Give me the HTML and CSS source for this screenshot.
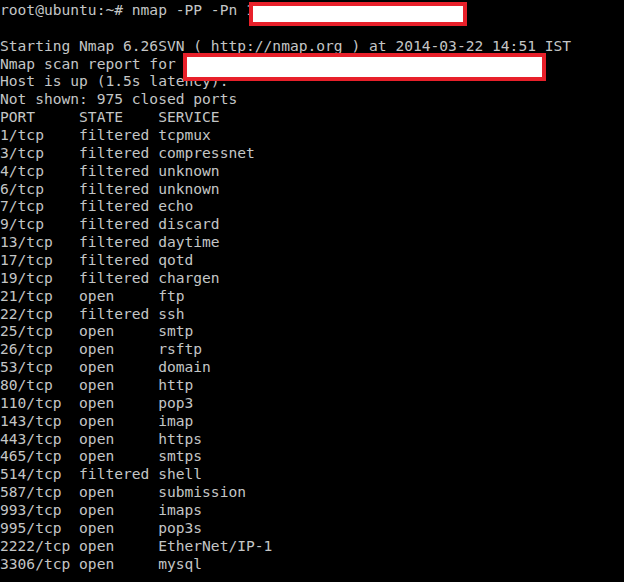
FILE: index.html
```html
<!DOCTYPE html>
<html>
<head>
<meta charset="utf-8">
<link rel="stylesheet" href="styles.css">
</head>
<body>
<div class="term">
<pre class="out">root@ubuntu:~# nmap -PP -Pn 1

Starting Nmap 6.26SVN ( http://nmap.org ) at 2014-03-22 14:51 IST
Nmap scan report for 
Host is up (1.5s latency).
Not shown: 975 closed ports
PORT     STATE    SERVICE
1/tcp    filtered tcpmux
3/tcp    filtered compressnet
4/tcp    filtered unknown
6/tcp    filtered unknown
7/tcp    filtered echo
9/tcp    filtered discard
13/tcp   filtered daytime
17/tcp   filtered qotd
19/tcp   filtered chargen
21/tcp   open     ftp
22/tcp   filtered ssh
25/tcp   open     smtp
26/tcp   open     rsftp
53/tcp   open     domain
80/tcp   open     http
110/tcp  open     pop3
143/tcp  open     imap
443/tcp  open     https
465/tcp  open     smtps
514/tcp  filtered shell
587/tcp  open     submission
993/tcp  open     imaps
995/tcp  open     pop3s
2222/tcp open     EtherNet/IP-1
3306/tcp open     mysql</pre>
<div class="redact redact-host"></div>
<div class="redact redact-report"></div>
</div>
</body>
</html>
```
FILE: styles.css
```css
html, body {
  margin: 0;
  padding: 0;
  background: #000;
}
.term {
  position: relative;
  width: 624px;
  height: 582px;
  background: #000;
  overflow: hidden;
}
.out {
  margin: 0;
  padding: 1px 0 0 0;
  font-family: "DejaVu Sans Mono", "Liberation Mono", monospace;
  font-size: 14.6px;
  line-height: 17.86px;
  color: #c4c6c6;
  white-space: pre;
}
.redact {
  position: absolute;
  background: #fff;
  border: 4px solid #e8202a;
  box-sizing: border-box;
}
.redact-host {
  left: 249px;
  top: 2px;
  width: 218px;
  height: 24px;
}
.redact-report {
  left: 183px;
  top: 53px;
  width: 363px;
  height: 28px;
}
```
